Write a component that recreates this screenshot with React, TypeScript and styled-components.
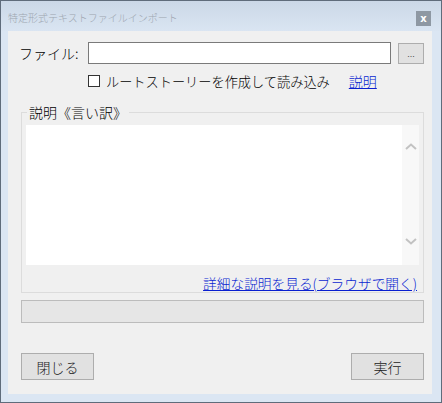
import React from "react";
import styled, { createGlobalStyle } from "styled-components";

const GlobalStyle = createGlobalStyle`
  html, body {
    margin: 0;
    padding: 0;
    background: #ffffff;
  }
  body {
    font-family: "Noto Sans CJK JP", "Noto Sans", sans-serif;
    font-size: 13px;
    font-weight: 300;
    color: #000;
  }
`;

const Window = styled.div`
  box-sizing: border-box;
  width: 442px;
  height: 403px;
  border: 1px solid #5f6c7b;
  background: #dbe6f3;
  display: flex;
  flex-direction: column;
  padding: 0 9px 8px 7px;
`;

const TitleBar = styled.div`
  height: 30px;
  margin: 0 -9px 0 -7px;
  padding: 0 10px 0 7px;
  display: flex;
  align-items: center;
  justify-content: space-between;
  background: linear-gradient(#cbd8e7, #dae5f2);
`;

const Title = styled.span`
  font-size: 10px;
  color: #9da6b0;
  padding-top: 2px;
`;

const CloseBox = styled.div`
  width: 15px;
  height: 15px;
  margin-top: 4px;
  background: #8e98a3;
  color: #fff;
  font-family: "DejaVu Sans", sans-serif;
  font-size: 10px;
  font-weight: bold;
  line-height: 15px;
  text-align: center;
`;

const Client = styled.div`
  flex: 1;
  background: #f0f0f0;
  display: flex;
  flex-direction: column;
  padding: 11px 8px 0 13px;
`;

const FileRow = styled.div`
  display: flex;
  align-items: center;
  height: 22px;
  margin-left: -2px;
`;

const Label = styled.span`
  width: 69px;
  font-size: 14px;
`;

const TextInput = styled.div`
  box-sizing: border-box;
  width: 303px;
  height: 22px;
  background: #fff;
  border: 1px solid #7a7a7a;
`;

const Button = styled.div<{ $w: number; $h: number }>`
  box-sizing: border-box;
  width: ${(p) => p.$w}px;
  height: ${(p) => p.$h}px;
  background: #e1e1e1;
  border: 1px solid #adadad;
  display: flex;
  align-items: center;
  justify-content: center;
  font-size: 14px;
  color: #1a1a1a;
`;

const BrowseButton = styled(Button)`
  margin-left: 7px;
  font-size: 10px;
  align-items: flex-end;
  padding-bottom: 3px;
  color: #444;
`;

const CheckRow = styled.div`
  display: flex;
  align-items: center;
  height: 12px;
  margin-top: 11px;
  padding-left: 67px;
`;

const CheckBox = styled.span`
  box-sizing: border-box;
  width: 12px;
  height: 12px;
  border: 1px solid #333;
  background: #fff;
`;

const CheckText = styled.span`
  margin-left: 6px;
  font-size: 13.2px;
  white-space: nowrap;
`;

const Link = styled.a`
  color: #0a1fd0;
  text-decoration: underline;
  white-space: nowrap;
`;

const HelpLink = styled(Link)`
  margin-left: 19px;
  font-size: 14px;
`;

const Group = styled.fieldset`
  margin: 17px 0 0 0;
  padding: 5px 4px 0 4px;
  border: 1px solid #dcdcdc;
  display: flex;
  flex-direction: column;
  min-width: 0;
`;

const Legend = styled.legend`
  margin-left: 1px;
  padding: 0 2px;
  font-size: 14px;
  line-height: 16px;
`;

const Memo = styled.div`
  height: 140px;
  background: #fff;
  display: flex;
  justify-content: flex-end;
`;

const ScrollBar = styled.div`
  width: 17px;
  background: #f8f8f8;
  display: flex;
  flex-direction: column;
  justify-content: space-between;
  align-items: center;
  padding: 18px 0 20px;
`;

const LinkRow = styled.div`
  height: 27px;
  display: flex;
  justify-content: flex-end;
  align-items: flex-end;
  padding-right: 2px;
  box-sizing: border-box;
  padding-bottom: 1px;
`;

const DetailLink = styled(Link)`
  font-size: 13.7px;
  line-height: 16px;
`;

const Progress = styled.div`
  box-sizing: border-box;
  height: 23px;
  margin-top: 7px;
  background: #e6e6e6;
  border: 1px solid #bcbcbc;
`;

const Footer = styled.div`
  margin-top: 30px;
  display: flex;
  justify-content: space-between;
`;

const Chevron = ({ up }: { up?: boolean }) => (
  <svg width="12" height="7" viewBox="0 0 12 7">
    <path
      d={up ? "M1 6 L6 1.5 L11 6" : "M1 1 L6 5.5 L11 1"}
      fill="none"
      stroke="#c2c2c2"
      strokeWidth="2"
    />
  </svg>
);

export default function App() {
  return (
    <>
      <GlobalStyle />
      <Window>
        <TitleBar>
          <Title>特定形式テキストファイルインポート</Title>
          <CloseBox>x</CloseBox>
        </TitleBar>
        <Client>
          <FileRow>
            <Label>ファイル:</Label>
            <TextInput />
            <BrowseButton $w={26} $h={21}>...</BrowseButton>
          </FileRow>
          <CheckRow>
            <CheckBox />
            <CheckText>ルートストーリーを作成して読み込み</CheckText>
            <HelpLink>説明</HelpLink>
          </CheckRow>
          <Group>
            <Legend>説明《言い訳》</Legend>
            <Memo>
              <ScrollBar>
                <Chevron up />
                <Chevron />
              </ScrollBar>
            </Memo>
            <LinkRow>
              <DetailLink>詳細な説明を見る(ブラウザで開く)</DetailLink>
            </LinkRow>
          </Group>
          <Progress />
          <Footer>
            <Button $w={73} $h={27}>閉じる</Button>
            <Button $w={73} $h={27}>実行</Button>
          </Footer>
        </Client>
      </Window>
    </>
  );
}
